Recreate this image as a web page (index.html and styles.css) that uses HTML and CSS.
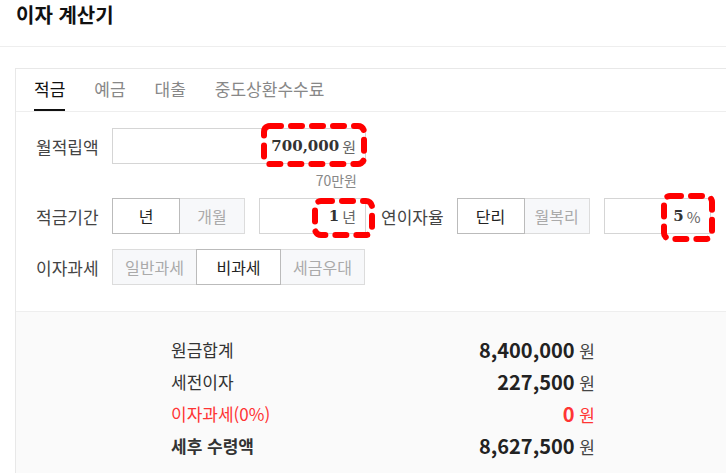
FILE: index.html
```html
<!DOCTYPE html>
<html lang="ko">
<head>
  <meta charset="UTF-8" />
  <meta name="viewport" content="width=device-width, initial-scale=1.0" />
  <title>이자 계산기</title>
  <link rel="stylesheet" href="styles.css">
</head>
<body>
  <div class="page">
    <h1 class="page-title">이자 계산기</h1>

    <div class="wrap">
      <div class="card">
        <div class="tabs">
          <span class="tab active">적금</span>
          <span class="tab">예금</span>
          <span class="tab">대출</span>
          <span class="tab">중도상환수수료</span>
        </div>

        <div class="form">
          <div class="row">
            <span class="label">월적립액</span>
            <div class="field field-wide">
              <b class="num">700,000</b><span class="unit">원</span>
            </div>
          </div>
          <div class="hint">70만원</div>

          <div class="row">
            <span class="label">적금기간</span>
            <div class="toggle">
              <span class="opt on">년</span>
              <span class="opt">개월</span>
            </div>
            <div class="field field-sm">
              <b class="num">1</b><span class="unit">년</span>
            </div>
            <span class="label label-inline">연이자율</span>
            <div class="toggle">
              <span class="opt on">단리</span>
              <span class="opt">월복리</span>
            </div>
            <div class="field field-sm">
              <b class="num">5</b><span class="unit">%</span>
            </div>
          </div>

          <div class="row row-spaced">
            <span class="label">이자과세</span>
            <div class="toggle toggle-3">
              <span class="opt">일반과세</span>
              <span class="opt on">비과세</span>
              <span class="opt">세금우대</span>
            </div>
          </div>
        </div>

        <div class="result">
          <ul class="result-list">
            <li><span>원금합계</span><span class="amount"><b>8,400,000</b> 원</span></li>
            <li><span>세전이자</span><span class="amount"><b>227,500</b> 원</span></li>
            <li class="tax"><span>이자과세(0%)</span><span class="amount"><b>0</b> 원</span></li>
            <li class="total"><span>세후 수령액</span><span class="amount"><b>8,627,500</b> 원</span></li>
          </ul>
        </div>
      </div>
    </div>

    <!-- annotation marks -->
    <svg class="mark mark-1" width="106" height="44"><rect x="3" y="3" width="100" height="38" rx="6" /></svg>
    <svg class="mark mark-2" width="63" height="40"><rect x="3" y="3" width="57" height="34" rx="6" /></svg>
    <svg class="mark mark-3" width="54" height="49"><rect x="3" y="3" width="48" height="43" rx="6" /></svg>
  </div>
</body>
</html>
```

FILE: styles.css
```css
body {
  margin: 0;
  font-family: 'Noto Sans CJK KR', 'Noto Sans', sans-serif;
  background-color: #fff;
  color: #333;
}
.page {
  position: relative;
  width: 726px;
  height: 473px;
  overflow: hidden;
}
.page-title {
  margin: 0;
  height: 47px;
  box-sizing: border-box;
  padding: 0 16px;
  font-size: 20px;
  line-height: 30px;
  font-weight: 700;
  color: #111;
  border-bottom: 1px solid #eee;
}
.wrap {
  padding: 21px 0 0 15px;
}
.card {
  border: 1px solid #e8e8e8;
  border-right: none;
  border-bottom: none;
  width: 760px;
}
.tabs {
  display: flex;
  height: 42px;
  padding-left: 18px;
  border-bottom: 1px solid #eee;
}
.tab {
  font-size: 17px;
  line-height: 40px;
  color: #888;
  margin-right: 29px;
  border-bottom: 2px solid transparent;
}
.tab.active {
  color: #111;
  border-bottom-color: #111;
}
.form {
  padding: 16px 0 26px 20px;
}
.row {
  display: flex;
  align-items: center;
}
.row-spaced {
  margin-top: 15px;
}
.label {
  width: 76px;
  font-size: 17px;
  color: #444;
}
.label-inline {
  width: auto;
  margin: 0 13px 0 15px;
}
.field {
  display: flex;
  align-items: center;
  justify-content: flex-end;
  height: 36px;
  box-sizing: border-box;
  border: 1px solid #d5d5d5;
  padding-right: 9px;
  background: #fff;
}
.field-wide {
  width: 254px;
}
.field-sm {
  width: 107px;
  margin-left: 14px;
}
.num {
  font-family: 'DejaVu Serif', serif;
  font-size: 15px;
  font-weight: 700;
  color: #333;
}
.unit {
  margin-left: 3px;
  font-size: 15px;
  color: #666;
}
.hint {
  width: 245px;
  height: 20px;
  line-height: 20px;
  margin: 6px 0 8px 76px;
  text-align: right;
  font-size: 14px;
  color: #888;
}
.toggle {
  display: flex;
}
.opt {
  width: 66px;
  height: 36px;
  box-sizing: border-box;
  display: flex;
  align-items: center;
  justify-content: center;
  font-size: 16px;
  color: #aaa;
  background: #f7f8fa;
  border: 1px solid #dcdcdc;
}
.opt:first-child {
  width: 68px;
}
.opt + .opt {
  margin-left: -1px;
}
.opt.on {
  color: #222;
  background: #fff;
  border-color: #bbb;
  position: relative;
}
.toggle-3 .opt,
.toggle-3 .opt:first-child {
  width: 85px;
}
.result {
  background: #fafafa;
  border-top: 1px solid #eee;
  padding: 21px 0 20px 155px;
}
.result-list {
  list-style: none;
  margin: 0;
  padding: 0;
  width: 424px;
}
.result-list li {
  display: flex;
  justify-content: space-between;
  align-items: center;
  height: 32px;
  font-size: 17px;
  color: #333;
}
.amount {
  color: #444;
}
.amount b {
  font-size: 20px;
  font-weight: 700;
  color: #222;
}
.result-list .tax,
.result-list .tax .amount,
.result-list .tax b {
  color: #ff3434;
}
.result-list .total {
  font-weight: 700;
}
.result-list .total .amount {
  font-weight: 400;
}
.mark {
  position: absolute;
}
.mark rect {
  fill: none;
  stroke: #ff0000;
  stroke-width: 6;
  stroke-dasharray: 11 10;
  stroke-linecap: round;
}
.mark-1 {
  left: 261px;
  top: 123px;
}
.mark-2 {
  left: 312px;
  top: 198px;
}
.mark-3 {
  left: 661px;
  top: 193px;
}
```
